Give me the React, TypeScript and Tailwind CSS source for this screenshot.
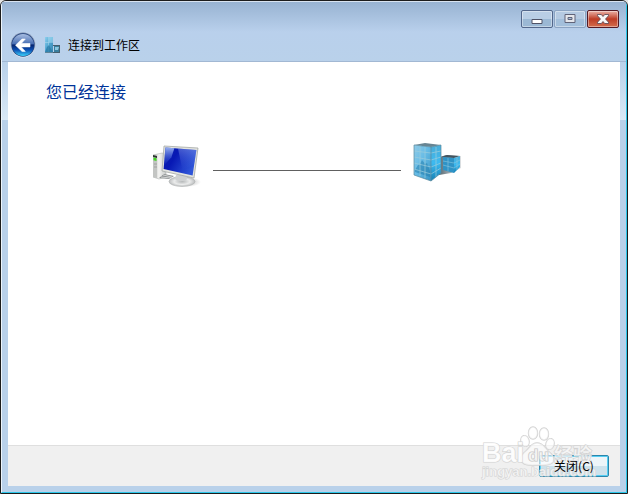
import type { ReactNode } from 'react';

function BackIcon() {
  return (
    <svg viewBox="0 0 26 26" className="size-6.5">
      <defs>
        <linearGradient id="back-ball" x1="0" y1="0" x2="0" y2="1">
          <stop offset="0" stopColor="#a9bee2" />
          <stop offset="0.44" stopColor="#4a70b4" />
          <stop offset="0.5" stopColor="#06256f" />
          <stop offset="0.72" stopColor="#0b4fb4" />
          <stop offset="1" stopColor="#3dd3fa" />
        </linearGradient>
        <linearGradient id="back-rim" x1="0" y1="0" x2="0" y2="1">
          <stop offset="0" stopColor="#7585a6" />
          <stop offset="1" stopColor="#e6f0fa" />
        </linearGradient>
      </defs>
      <circle cx="13" cy="13" r="12.5" fill="url(#back-rim)" />
      <circle cx="13" cy="13" r="11.7" fill="#21437f" />
      <circle cx="13" cy="13" r="11" fill="url(#back-ball)" />
      <path d="M5.5 13.2 12 7h3.3l-4 4.5H20v3.4h-8.7l4 4.5H12z" fill="#fff" stroke="#fff" strokeWidth="0.6" strokeLinejoin="round" />
    </svg>
  );
}

function WorkplaceIcon() {
  return (
    <svg viewBox="0 0 16 16" className="size-4">
      <defs>
        <linearGradient id="work-glass" x1="0" y1="0" x2="1" y2="1">
          <stop offset="0" stopColor="#8fd0ee" />
          <stop offset="0.5" stopColor="#4da3cf" />
          <stop offset="1" stopColor="#3a86ae" />
        </linearGradient>
      </defs>
      <path d="M1 0h8v16H1z" fill="url(#work-glass)" />
      <path d="M5 0h4v5H5z" fill="#a4dcf3" opacity="0.6" />
      <path d="M1 5.5h8M4.5 0v16" stroke="#c5e4f1" strokeWidth="0.6" opacity="0.7" />
      <path d="m1 15 2-5 2-2 2 4 2 3z" fill="#2b7da9" opacity="0.8" />
      <path d="M1 15h8v1H1z" fill="#5f8499" />
      <path d="M10 8h6v8h-6z" fill="#397f9f" />
      <path d="M9 8h7v1H9zM15 8h1v8h-1zM9 15h7v1H9z" fill="#46606f" />
      <path d="M11 10h4l-1 3h-3z" fill="#8ac7df" />
    </svg>
  );
}

function ComputerIcon() {
  return (
    <svg viewBox="0 0 48 44" className="h-11 w-12">
      <defs>
        <linearGradient id="pc-screen" x1="0" y1="0" x2="1" y2="0.5">
          <stop offset="0" stopColor="#0b24ae" />
          <stop offset="0.4" stopColor="#0718b4" />
          <stop offset="1" stopColor="#2f55d8" />
        </linearGradient>
        <linearGradient id="pc-shine" x1="0" y1="0" x2="0" y2="1">
          <stop offset="0" stopColor="#b8d2ff" stopOpacity="0.8" />
          <stop offset="1" stopColor="#3255dd" stopOpacity="0.1" />
        </linearGradient>
        <linearGradient id="pc-case" x1="0" y1="0" x2="1" y2="0">
          <stop offset="0" stopColor="#aeb1b0" />
          <stop offset="0.45" stopColor="#f4f4f2" />
          <stop offset="1" stopColor="#c6c9c9" />
        </linearGradient>
        <radialGradient id="pc-base">
          <stop offset="0" stopColor="#b4b7b8" />
          <stop offset="0.6" stopColor="#ebecec" />
          <stop offset="1" stopColor="#bcbebf" />
        </radialGradient>
        <radialGradient id="pc-shadow">
          <stop offset="0" stopColor="#555" stopOpacity="0.5" />
          <stop offset="1" stopColor="#777" stopOpacity="0" />
        </radialGradient>
      </defs>
      <ellipse cx="34" cy="37" rx="14" ry="5" fill="url(#pc-shadow)" />
      <path d="m0 10 9-2 4 1v23l-7 2-6-2z" fill="url(#pc-case)" stroke="#b4b7b6" strokeWidth="0.6" />
      <path d="m0 10 4 1v22l-4-1z" fill="#c3c5c3" />
      <path d="m0 10 4 1v2l-4-1z" fill="#2e3632" />
      <path d="m.5 12.5 3 .8v2.8l-3-.8z" fill="#43d922" />
      <path d="M1 19h3M1 22h3" stroke="#898d8a" strokeWidth="0.6" />
      <path d="m6 33 5-4 10 2-5 3z" fill="#8b8f90" />
      <path d="m8 32 10 1m-8-3 9 2" stroke="#e2e3e3" strokeWidth="0.8" />
      <ellipse cx="29" cy="36.5" rx="13" ry="5" fill="url(#pc-base)" stroke="#b0b3b4" strokeWidth="0.6" />
      <path d="M23 30h10l1 4c-2 3-10 3-12 0z" fill="#cfd1d2" />
      <path d="m11 1 34 2-4 30-32-7z" fill="#e3e4df" stroke="#a6a9a7" strokeWidth="0.8" strokeLinejoin="round" />
      <path d="m12.4 2.6 31 2.4-3.8 25.4-29-6.4z" fill="url(#pc-screen)" />
      <path d="m12.4 2.6 9 .7-3 9-7.2 8z" fill="url(#pc-shine)" />
      <path d="m25 3.6 18.4 1.4-2 14-12 6z" fill="url(#pc-shine)" opacity="0.45" />
    </svg>
  );
}

function BuildingsIcon() {
  return (
    <svg viewBox="0 0 50 40" className="h-10 w-12.5">
      <defs>
        <linearGradient id="tower-left" x1="0" y1="0" x2="1" y2="1">
          <stop offset="0" stopColor="#91cbe7" />
          <stop offset="0.45" stopColor="#67bce6" />
          <stop offset="1" stopColor="#3594c4" />
        </linearGradient>
        <linearGradient id="tower-right" x1="0" y1="0" x2="0" y2="1">
          <stop offset="0" stopColor="#4badd8" />
          <stop offset="0.5" stopColor="#3cbaf1" />
          <stop offset="1" stopColor="#1680b3" />
        </linearGradient>
        <linearGradient id="tower-shadow" x1="0" y1="0" x2="1" y2="0">
          <stop offset="0" stopColor="#17303c" stopOpacity="0.8" />
          <stop offset="1" stopColor="#526571" stopOpacity="0.2" />
        </linearGradient>
      </defs>
      <path d="m24 15 9-3 15 1v12l-10 5-12 2z" fill="url(#tower-shadow)" />
      <path d="m28 14 6-2 13 1-6 2z" fill="#44545f" />
      <path d="m30 14 11 1v15l-11-3z" fill="#2f93c6" />
      <path d="m41 15 6-2v11l-6 6z" fill="url(#tower-right)" />
      <path d="m30 18 11 2 6-3M30 22l11 3 6-4M35 15v13M44 14v13" fill="none" stroke="#8ac8df" strokeWidth="0.6" />
      <path d="m1 2 11-2 16 2-10 2z" fill="#688593" />
      <path d="m1 2 17 2v34L1 32z" fill="url(#tower-left)" />
      <path d="m18 4 10-2v28l-10 8z" fill="url(#tower-right)" />
      <path d="m2 27 3-5 2-1 2-4 3 4 2-1 3 8v6L2 29z" fill="#257fae" opacity="0.55" />
      <path
        d="m1 8 17 2 10-2M1 14l17 3 10-3M1 20l17 4 10-4M1 26l17 5 10-6M7 3v30M12 4v31M23 4v30"
        fill="none"
        stroke="#9ccddd"
        strokeWidth="0.7"
      />
      <path d="m1 2 17 2 10-2M18 4v34M1 2v30l17 6 10-8V2" fill="none" stroke="#5a899e" strokeWidth="0.7" />
    </svg>
  );
}

function Watermark() {
  return (
    <div aria-hidden="true" className="pointer-events-none absolute right-6 bottom-1 z-10 h-16 w-32">
      <svg viewBox="0 0 128 64" className="size-full overflow-visible">
        <g fill="#fff" fillOpacity="0.6" stroke="#d2d2d2" strokeWidth="1.2" paintOrder="stroke">
          <g strokeWidth="1.4">
            <ellipse cx="50" cy="16" rx="4" ry="5.5" transform="rotate(-15 50 16)" />
            <ellipse cx="58" cy="8" rx="4.5" ry="6" />
            <ellipse cx="69" cy="9" rx="4.5" ry="6" />
            <ellipse cx="75" cy="19" rx="4" ry="5.5" transform="rotate(15 75 19)" />
            <path d="M62 18c-6 0-7 5-11 8-5 4-6 8-4 11 3 4 9 3 15 3s13 1 16-3c2-4-1-8-5-11-4-4-5-8-11-8z" />
          </g>
          <g fontFamily="'Liberation Sans', sans-serif" fontWeight="700">
            <text x="7" y="37" fontSize="27" fillOpacity="0.9">Bai</text>
            <text x="53" y="36" fontSize="17" stroke="#c4c4c4">du</text>
            <text x="79" y="37" fontSize="19" fontFamily="'Noto Sans CJK SC', sans-serif">经验</text>
            <text x="7" y="51" fontSize="13" strokeWidth="1">jingyan.baidu.com</text>
          </g>
        </g>
      </svg>
    </div>
  );
}

type CaptionButtonProps = {
  label: string;
  className: string;
  children: ReactNode;
};

function CaptionButton({ label, className, children }: CaptionButtonProps) {
  return (
    <button
      type="button"
      aria-label={label}
      className={`flex h-4.5 w-8 items-center justify-center rounded-xs border inset-ring inset-ring-white/40 ${className}`}
    >
      {children}
    </button>
  );
}

function TitleBar() {
  return (
    <header className="bg-linear-to-b from-[#98b3d2] via-[#b9d0ec] via-50% to-[#b9d1ea]">
      <div className="flex h-6.5 items-end justify-end gap-px pr-1.75">
        <CaptionButton
          label="最小化"
          className="border-[#53678b] bg-linear-to-b from-[#b9cee5] from-50% to-[#9bb8d4] to-50%"
        >
          <svg viewBox="0 0 12 12" className="size-3">
            <path d="M1 6.5h10v4H1z" fill="#fff" stroke="#505367" />
          </svg>
        </CaptionButton>
        <CaptionButton
          label="最大化"
          className="border-[#8ba3c2] bg-linear-to-b from-[#b5cae2] from-50% to-[#a3bfdb] to-50%"
        >
          <svg viewBox="0 0 12 12" className="size-3">
            <path d="M1 1.5h10v8H1z" fill="#e4e6eb" stroke="#606378" />
            <path d="M4 4.5h4v2H4z" fill="#a6bfda" stroke="#606378" />
          </svg>
        </CaptionButton>
        <CaptionButton
          label="关闭窗口"
          className="border-[#551a24] bg-linear-to-b from-[#e9b0a6] via-[#bd3b25] via-50% to-[#d36d4d]"
        >
          <svg viewBox="0 0 12 12" className="size-3">
            <path
              d="M.5 1.5h3.8l1.7 2 1.7-2h3.8v1.3l-3 3.2 3 3.2v1.3H7.7l-1.7-2-1.7 2H.5V9.2l3-3.2-3-3.2z"
              fill="#f8f8f8"
              stroke="#544451"
              strokeWidth="0.8"
            />
          </svg>
        </CaptionButton>
      </div>
      <div className="flex h-8.5 items-center border-b border-[#a2b8d3] pl-2">
        <button type="button" aria-label="返回">
          <BackIcon />
        </button>
        <span className="ml-2">
          <WorkplaceIcon />
        </span>
        <h1 className="ml-2 text-xs">连接到工作区</h1>
      </div>
    </header>
  );
}

function SideFrame() {
  return (
    <div className="w-1.5 bg-linear-to-b from-[#b9d1ea] to-[#d9e9f6] [background-size:100%_58px] bg-no-repeat" />
  );
}

function App() {
  return (
    <div className="h-screen bg-[#e4e4e4] font-['Noto_Sans_CJK_SC',sans-serif] text-black">
      <div className="relative flex h-full flex-col overflow-hidden rounded-t-md border border-[#1c1c1c] bg-[#b9d1ea]">
        <div className="flex min-h-0 flex-1 flex-col rounded-t-sm border border-t-[#d8e3f0] border-r-[#2cc7ea] border-b-[#2cc7ea] border-l-[#edf5fc]">
          <TitleBar />
          <div className="flex min-h-0 flex-1 bg-[#b9d1ea]">
            <SideFrame />
            <div className="mb-1.5 flex min-w-0 flex-1 flex-col bg-white">
              <main className="flex-1 px-9.5 pt-4.25">
                <h2 className="text-base text-[#003399]">您已经连接</h2>
                <div className="mt-10 flex items-center justify-center gap-3 pr-3">
                  <ComputerIcon />
                  <div className="mt-1.5 h-px w-[36%] bg-[#606060]" />
                  <div className="mb-2">
                    <BuildingsIcon />
                  </div>
                </div>
              </main>
              <footer className="flex h-10.25 items-center justify-end border-t border-[#dfdfdf] bg-[#f0f0f0] pr-2.75">
                <button
                  type="button"
                  className="h-5.5 w-17.5 rounded-xs border border-[#2c86ab] bg-linear-to-b from-[#edf5f9] from-50% to-[#cde2ec] to-50% text-xs inset-ring inset-ring-[#55cef3]"
                >
                  <span className="relative z-20">关闭(C)</span>
                </button>
              </footer>
            </div>
            <SideFrame />
          </div>
        </div>
        <Watermark />
      </div>
    </div>
  );
}

export default App;
